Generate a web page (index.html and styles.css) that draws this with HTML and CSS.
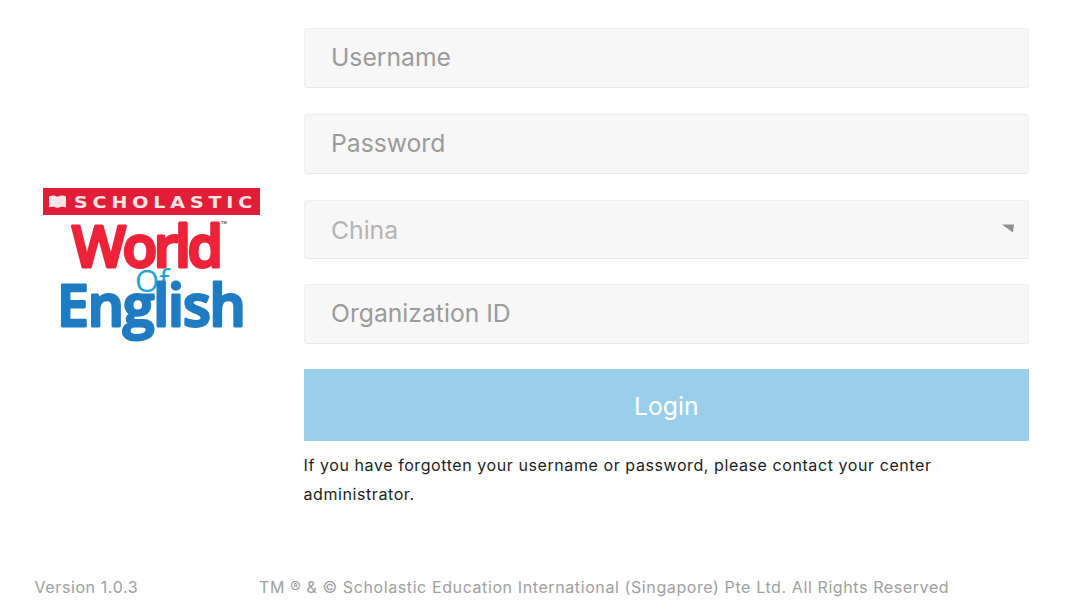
FILE: index.html
```html
<!DOCTYPE html>
<html lang="en">
<head>
<meta charset="utf-8">
<title>Scholastic World of English</title>
<link rel="stylesheet" href="styles.css">
</head>
<body>
<div class="page">
  <main class="main">
    <div class="brand">
      <svg class="logo" viewBox="0 0 218 160" width="218" height="160" aria-label="Scholastic World of English">
        <rect x="0" y="0" width="217" height="27" fill="#e21d38"/>
        <path d="M6 8.500c3-1.500 6-1.500 8.500 0.500c2.500-2 5.500-2 8.500-0.500v11c-3-1.200-6-1-8.500 0.800c-2.500-1.800-5.500-2-8.500-0.800z" fill="#fbe3e6"/>
        <text class="logo-scholastic" transform="translate(31 19.500) scale(1.190 1)">SCHOLASTIC</text>
        <text class="logo-world" x="29" y="79">World</text>
        <text class="logo-tm" x="178" y="36">TM</text>
        <text class="logo-of" x="92" y="104">Of</text>
        <text class="logo-english" x="14" y="138">English</text>
      </svg>
    </div>
    <form class="form">
      <input class="field" type="text" placeholder="Username">
      <input class="field" type="text" placeholder="Password">
      <div class="select">
        <span class="select-value">China</span>
        <svg class="caret" width="12" height="9" viewBox="0 0 12 9"><path d="M0 0.500L12 0.500L11 8.500Z" fill="#8f8f8f"/></svg>
      </div>
      <input class="field" type="text" placeholder="Organization ID">
      <button class="login" type="button">Login</button>
      <p class="help">If you have forgotten your username or password, please contact your center administrator.</p>
    </form>
  </main>
  <footer class="footer">
    <span class="version">Version 1.0.3</span>
    <span class="copy">TM ® &amp; © Scholastic Education International (Singapore) Pte Ltd. All Rights Reserved</span>
  </footer>
</div>
</body>
</html>
```
FILE: styles.css
```css
* { box-sizing: border-box; }
html, body { margin: 0; height: 100%; background: #fff; overflow: hidden; }
body { font-family: Inter, "Liberation Sans", sans-serif; }
.page { width: 1080px; height: 607px; display: flex; flex-direction: column; }
.main { display: flex; padding: 28px 51px 0 43px; flex: 1; }
.brand { width: 260.500px; display: flex; align-items: flex-start; padding-top: 160px; flex: none; }
.logo { display: block; }
.logo-scholastic { font: 700 16px "DejaVu Sans", sans-serif; letter-spacing: 4.100px; fill: #fbe3e6; }
.logo-world { font: 600 57px "Open Sans", sans-serif; letter-spacing: -3.400px; fill: #ee2238; stroke: #ee2238; stroke-width: 3px; stroke-linejoin: round; }
.logo-tm { font: 700 4px "Liberation Sans", sans-serif; fill: #555; }
.logo-of { font: 400 31px "Open Sans", sans-serif; letter-spacing: 0; fill: #1fa3cf; }
.logo-english { font: 600 57px "Open Sans", sans-serif; letter-spacing: -1.100px; fill: #1f7cc2; stroke: #1f7cc2; stroke-width: 2.800px; stroke-linejoin: round; }
.form { width: 725.500px; display: flex; flex-direction: column; flex: none; }
.field, .select {
  width: 100%; height: 60px; margin-bottom: 26px; padding: 0 27px 2px 26.500px;
  background: #f7f7f7; border: 1px solid #efefef; border-bottom-color: #e8e8e8; border-radius: 3px;
  font: 400 24.700px Inter, sans-serif; color: #9b9b9b; outline: none;
}
.field::placeholder { color: #9b9b9b; opacity: 1; }
.select { display: flex; align-items: center; justify-content: space-between; padding: 0 14px 0 26.500px; height: 59px; margin-bottom: 25px; }
.select-value { color: #b4b4b4; }
.caret { display: block; margin-top: -3px; }
.form .field:nth-of-type(3) { margin-bottom: 25px; }
.login {
  width: 100%; height: 72px; background: #9acfec; border: 0; color: #fff;
  font: 400 24.700px Inter, sans-serif; display: block; padding: 2px 0 0;
}
.help { margin: 10px 0 0; font-size: 16px; line-height: 29px; letter-spacing: 0.580px; color: #1d1d1d; }
.footer { display: flex; padding: 0 0 10px 34.500px; font-size: 16px; line-height: 20px; letter-spacing: 0.600px; color: #a0a0a0; }
.version { width: 224.500px; flex: none; }
```
